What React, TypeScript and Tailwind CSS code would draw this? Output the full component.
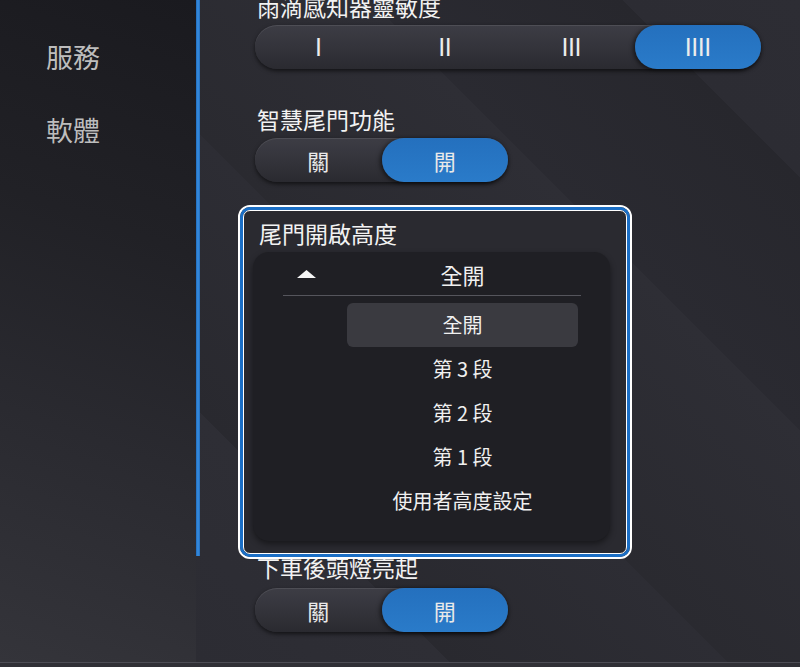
import React from "react";

const FONT = "font-['Noto_Sans_CJK_TC','Noto_Sans_CJK_SC',sans-serif]";

function Seg({
  options,
  selected,
  roman,
  wide,
}: {
  options: string[];
  selected: number;
  roman?: boolean;
  wide?: boolean;
}) {
  return (
    <div
      className={
        wide
          ? "flex h-[44px] w-[506px] rounded-full bg-[linear-gradient(180deg,#3d3d45_0%,#33333a_55%,#2a2a30_100%)] shadow-[0_2px_4px_rgba(0,0,0,0.6),inset_0_1px_0_rgba(255,255,255,0.09)]"
          : "flex h-[44px] w-[253px] rounded-full bg-[linear-gradient(180deg,#3d3d45_0%,#33333a_55%,#2a2a30_100%)] shadow-[0_2px_4px_rgba(0,0,0,0.6),inset_0_1px_0_rgba(255,255,255,0.09)]"
      }
    >
      {options.map((o, i) => (
        <div
          key={i}
          className={
            i === selected
              ? "flex flex-1 items-center justify-center rounded-full bg-[linear-gradient(180deg,#2470be_0%,#2a7bc9_100%)] shadow-[-2px_1px_4px_rgba(0,0,0,0.55)]"
              : "flex flex-1 items-center justify-center"
          }
        >
          {roman ? (
            <span className="font-['Liberation_Sans',sans-serif] text-[25px] leading-none tracking-[-0.5px] text-[#ececec]">
              {o}
            </span>
          ) : (
            <span className={`${FONT} text-[22px] leading-none text-[#e9e9e9]`}>{o}</span>
          )}
        </div>
      ))}
    </div>
  );
}

function Label({ children }: { children: React.ReactNode }) {
  return (
    <div className={`${FONT} pl-[2px] text-[23px] leading-[28px] text-[#f2f2f2]`}>{children}</div>
  );
}

export default function App() {
  const items = ["全開", "第 3 段", "第 2 段", "第 1 段", "使用者高度設定"];
  return (
    <div className={`${FONT} flex h-[667px] w-[800px] flex-col overflow-hidden bg-[#2a2a30]`}>
      <div className="flex h-[662px]">
        {/* Sidebar */}
        <aside className="flex w-[196px] flex-col bg-[linear-gradient(200deg,#1a1a1f_0%,#212126_35%,#2a2a30_65%,#34343a_100%)] pl-[46px] pt-[21px]">
          <div className="flex h-[73px] items-center text-[27px] text-[#bdbdbd]">服務</div>
          <div className="flex h-[73px] items-center text-[27px] text-[#bdbdbd]">軟體</div>
        </aside>

        {/* Main */}
        <main className="flex flex-1 bg-[linear-gradient(225deg,#2d2d34_0%,#2c2c33_14%,#27272d_14%,#2a2a31_34%,#2e2e35_34%,#2a2a30_58%,#2d2d34_58%,#29292f_80%,#2e2e35_80%,#2c2c33_100%)]">
          <div className="w-[4px] shrink-0">
            <div className="h-[556px] w-[4px] bg-[linear-gradient(90deg,#1f6cbd,#3a8ee0_50%,#1f6cbd)]" />
          </div>
          <div className="flex flex-col pl-[55px]">
            <div className="mt-[-8px]">
              <Label>雨滴感知器靈敏度</Label>
            </div>
            <div className="mt-[5px]">
              <Seg options={["I", "II", "III", "IIII"]} selected={3} roman wide />
            </div>

            <div className="mt-[36px]">
              <Label>智慧尾門功能</Label>
            </div>
            <div className="mt-[5px]">
              <Seg options={["關", "開"]} selected={1} />
            </div>

            {/* Highlighted dropdown box */}
            <div className="relative z-10 mb-[-6px] ml-[-17px] mt-[23px] w-[394px] rounded-[12px] border-2 border-white">
              <div className="rounded-[10px] border-[3px] border-[#1b6fc6]">
                <div className="rounded-[7px] border border-white bg-[#2a2a30] pb-[12px] pt-[8px]">
                  <div className={`${FONT} pl-[15px] text-[23px] leading-[28px] text-[#f2f2f2]`}>
                    尾門開啟高度
                  </div>
                  <div className="ml-[9px] mt-[5px] w-[357px] rounded-[16px] bg-[#1f1f24] pb-[18px] shadow-[0_3px_6px_rgba(0,0,0,0.45)]">
                    <div className="flex h-[43px] items-center">
                      <div className="w-[44px]" />
                      <svg width="19" height="8" viewBox="0 0 19 8" className="block">
                        <polygon points="9.5,0 19,8 0,8" fill="#f5f5f5" />
                      </svg>
                      <div className="w-[31px]" />
                      <div className="w-[231px] text-center text-[22px] leading-none text-[#f0f0f0]">全開</div>
                    </div>
                    <div className="ml-[30px] h-px w-[298px] bg-[#55555c]" />
                    <div className="mt-[7px] flex flex-col">
                      {items.map((it, i) => (
                        <div
                          key={i}
                          className={
                            i === 0
                              ? "ml-[94px] flex h-[44px] w-[231px] items-center justify-center rounded-[6px] bg-[#3a3a40] text-[20px] text-[#f0f0f0]"
                              : "ml-[94px] flex h-[44px] w-[231px] items-center justify-center text-[20px] text-[#f0f0f0]"
                          }
                        >
                          {it}
                        </div>
                      ))}
                    </div>
                  </div>
                </div>
              </div>
            </div>

            <Label>下車後頭燈亮起</Label>
            <div className="mt-[7px]">
              <Seg options={["關", "開"]} selected={1} />
            </div>
          </div>
        </main>
      </div>
      <div className="h-[5px] border-t border-[#4d4d55] bg-[#303036]" />
    </div>
  );
}
